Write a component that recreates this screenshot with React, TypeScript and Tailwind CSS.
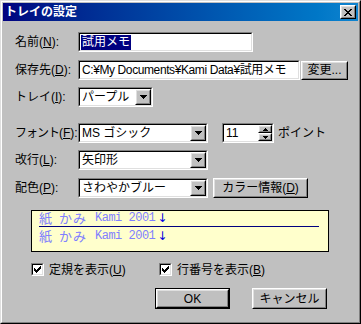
import React from "react";

const FONT = "font-['Liberation_Sans','Noto_Sans_CJK_JP',sans-serif]";

function Sunken({ className = "", children, bg = "bg-white" }: { className?: string; children?: React.ReactNode; bg?: string }) {
  return (
    <div className={`border border-t-[#808080] border-l-[#808080] border-b-white border-r-white ${className}`}>
      <div className={`h-full border border-t-black border-l-black border-b-[#dfdfdf] border-r-[#dfdfdf] flex items-center overflow-hidden ${bg}`}>
        {children}
      </div>
    </div>
  );
}

function Raised({ className = "", children }: { className?: string; children?: React.ReactNode }) {
  return (
    <div className={`border border-t-white border-l-white border-b-black border-r-black bg-[#c0c0c0] ${className}`}>
      <div className="h-full border border-t-[#dfdfdf] border-l-[#dfdfdf] border-b-[#808080] border-r-[#808080] flex items-center justify-center">
        {children}
      </div>
    </div>
  );
}

function DownTri() {
  return (
    <svg width="7" height="4" viewBox="0 0 7 4" shapeRendering="crispEdges">
      <rect x="0" y="0" width="7" height="1" fill="#000" />
      <rect x="1" y="1" width="5" height="1" fill="#000" />
      <rect x="2" y="2" width="3" height="1" fill="#000" />
      <rect x="3" y="3" width="1" height="1" fill="#000" />
    </svg>
  );
}

function Combo({ width, text }: { width: string; text: string }) {
  return (
    <Sunken className={`${width} h-[20px]`}>
      <span className="flex-1 pl-[2px] text-[12px] leading-[14px] text-black whitespace-nowrap overflow-hidden">{text}</span>
      <Raised className="w-[16px] h-[16px] shrink-0">
        <DownTri />
      </Raised>
    </Sunken>
  );
}

function U({ children }: { children: React.ReactNode }) {
  return <span className="underline underline-offset-[1px]">{children}</span>;
}

function Label({ children }: { children: React.ReactNode }) {
  return <div className="w-[63px] shrink-0 text-[12px] leading-[14px] text-black whitespace-nowrap">{children}</div>;
}

function Check() {
  return (
    <Sunken className="w-[13px] h-[13px]">
      <div className="w-full h-full flex items-center justify-center">
        <svg width="7" height="7" viewBox="0 0 7 7" shapeRendering="crispEdges">
          <rect x="0" y="2" width="1" height="3" fill="#000" />
          <rect x="1" y="3" width="1" height="3" fill="#000" />
          <rect x="2" y="4" width="1" height="3" fill="#000" />
          <rect x="3" y="3" width="1" height="3" fill="#000" />
          <rect x="4" y="2" width="1" height="3" fill="#000" />
          <rect x="5" y="1" width="1" height="3" fill="#000" />
          <rect x="6" y="0" width="1" height="3" fill="#000" />
        </svg>
      </div>
    </Sunken>
  );
}

function CloseX() {
  return (
    <svg width="8" height="7" viewBox="0 0 8 7" shapeRendering="crispEdges">
      <rect x="0" y="0" width="2" height="1" fill="#000" />
      <rect x="6" y="0" width="2" height="1" fill="#000" />
      <rect x="1" y="1" width="2" height="1" fill="#000" />
      <rect x="5" y="1" width="2" height="1" fill="#000" />
      <rect x="2" y="2" width="4" height="1" fill="#000" />
      <rect x="3" y="3" width="2" height="1" fill="#000" />
      <rect x="2" y="4" width="4" height="1" fill="#000" />
      <rect x="1" y="5" width="2" height="1" fill="#000" />
      <rect x="5" y="5" width="2" height="1" fill="#000" />
      <rect x="0" y="6" width="2" height="1" fill="#000" />
      <rect x="6" y="6" width="2" height="1" fill="#000" />
    </svg>
  );
}

function PreviewLine() {
  return (
    <div className="flex items-end h-[13px] leading-[13px] text-[#8080ff] whitespace-nowrap">
      <span className="text-[13px] w-[13px]">紙</span>
      <span className="w-[7px]" />
      <span className="text-[13px] w-[28px] tracking-[1px]">かみ</span>
      <span className="w-[8px]" />
      <span className="font-['Liberation_Mono',monospace] text-[12px] tracking-[-0.5px]">Kami 2001</span>
      <span className="font-['DejaVu_Sans',sans-serif] text-[#0000e0] text-[12px] ml-[2px]">↓</span>
    </div>
  );
}

export default function App() {
  return (
    <div className={`w-[361px] h-[324px] border border-t-[#dfdfdf] border-l-[#dfdfdf] border-b-black border-r-black ${FONT}`}>
      <div className="h-full border border-t-white border-l-white border-b-[#808080] border-r-[#808080] bg-[#c0c0c0] p-px flex flex-col">
        {/* Title bar */}
        <div className="h-[18px] flex items-center bg-gradient-to-r from-[#000080] to-[#1084d0] pl-[2px] pr-[2px]">
          <span className="flex-1 text-white font-bold text-[12px] leading-[14px]">トレイの設定</span>
          <Raised className="w-[16px] h-[14px]">
            <CloseX />
          </Raised>
        </div>

        {/* Content */}
        <div className="flex-1 flex flex-col pl-[12px]">
          {/* Row 1 */}
          <div className="mt-[11px] h-[20px] flex items-center">
            <Label>名前(<U>N</U>):</Label>
            <Sunken className="w-[175px] h-[20px]">
              <span className="ml-[1px] bg-[#000080] text-white text-[12px] leading-[15px] px-px">試用メモ</span>
            </Sunken>
          </div>
          {/* Row 2 */}
          <div className="mt-[8px] h-[20px] flex items-center">
            <Label>保存先(<U>D</U>):</Label>
            <Sunken className="w-[222px] h-[20px]">
              <span className="pl-[2px] text-[12px] leading-[14px] tracking-[-0.4px] text-black whitespace-nowrap">C:¥My Documents¥Kami Data¥試用メモ</span>
            </Sunken>
            <Raised className="ml-px w-[47px] h-[19px]">
              <span className="text-[12px] leading-[14px] text-black">変更...</span>
            </Raised>
          </div>
          {/* Row 3 */}
          <div className="mt-[7px] h-[20px] flex items-center">
            <Label>トレイ(<U>I</U>):</Label>
            <Combo width="w-[75px]" text="パープル" />
          </div>
          {/* Row 4 */}
          <div className="mt-[16px] h-[20px] flex items-center">
            <Label><span className="tracking-[-1px]">フォント</span>(<U>F</U>):</Label>
            <Combo width="w-[130px]" text="MS ゴシック" />
            <Sunken className="ml-[14px] w-[52px] h-[20px]">
              <span className="flex-1 pl-[2px] text-[12px] leading-[14px] text-black">11</span>
              <div className="flex flex-col w-[14px] h-[16px]">
                <Raised className="w-[14px] h-[8px]">
                  <svg width="5" height="3" viewBox="0 0 5 3" shapeRendering="crispEdges">
                    <rect x="2" y="0" width="1" height="1" fill="#000" />
                    <rect x="1" y="1" width="3" height="1" fill="#000" />
                    <rect x="0" y="2" width="5" height="1" fill="#000" />
                  </svg>
                </Raised>
                <Raised className="w-[14px] h-[8px]">
                  <svg width="5" height="3" viewBox="0 0 5 3" shapeRendering="crispEdges">
                    <rect x="0" y="0" width="5" height="1" fill="#000" />
                    <rect x="1" y="1" width="3" height="1" fill="#000" />
                    <rect x="2" y="2" width="1" height="1" fill="#000" />
                  </svg>
                </Raised>
              </div>
            </Sunken>
            <span className="ml-[4px] text-[12px] leading-[14px] text-black">ポイント</span>
          </div>
          {/* Row 5 */}
          <div className="mt-[7px] h-[20px] flex items-center">
            <Label>改行(<U>L</U>):</Label>
            <Combo width="w-[130px]" text="矢印形" />
          </div>
          {/* Row 6 */}
          <div className="mt-[8px] h-[20px] flex items-center">
            <Label>配色(<U>P</U>):</Label>
            <Combo width="w-[130px]" text="さわやかブルー" />
            <Raised className="ml-[5px] w-[95px] h-[20px]">
              <span className="text-[12px] leading-[14px] text-black">カラー情報(<U>D</U>)</span>
            </Raised>
          </div>
          {/* Preview */}
          <div className="mt-[12px] ml-[16px] w-[298px] h-[42px] border border-black bg-[#ffffcc] flex flex-col pl-[7px] pt-px">
            <PreviewLine />
            <div className="mt-px w-[280px] h-px bg-[#000080]" />
            <div className="mt-[3px]">
              <PreviewLine />
            </div>
          </div>
          {/* Checkboxes */}
          <div className="mt-[11px] ml-[16px] h-[13px] flex items-center">
            <div className="w-[128px] flex items-center">
              <Check />
              <span className="ml-[5px] text-[12px] leading-[14px] text-black whitespace-nowrap">定規を表示(<U>U</U>)</span>
            </div>
            <div className="flex items-center">
              <Check />
              <span className="ml-[5px] text-[12px] leading-[14px] text-black whitespace-nowrap">行番号を表示(<U>B</U>)</span>
            </div>
          </div>
          {/* Buttons */}
          <div className="mt-[12px] h-[21px] flex items-center">
            <div className="ml-[140px] w-[75px] h-[21px] border border-black">
              <Raised className="w-full h-full">
                <span className="text-[12px] leading-[14px] text-black">OK</span>
              </Raised>
            </div>
            <Raised className="ml-[22px] w-[75px] h-[21px]">
              <span className="text-[12px] leading-[14px] text-black">キャンセル</span>
            </Raised>
          </div>
        </div>
      </div>
    </div>
  );
}
